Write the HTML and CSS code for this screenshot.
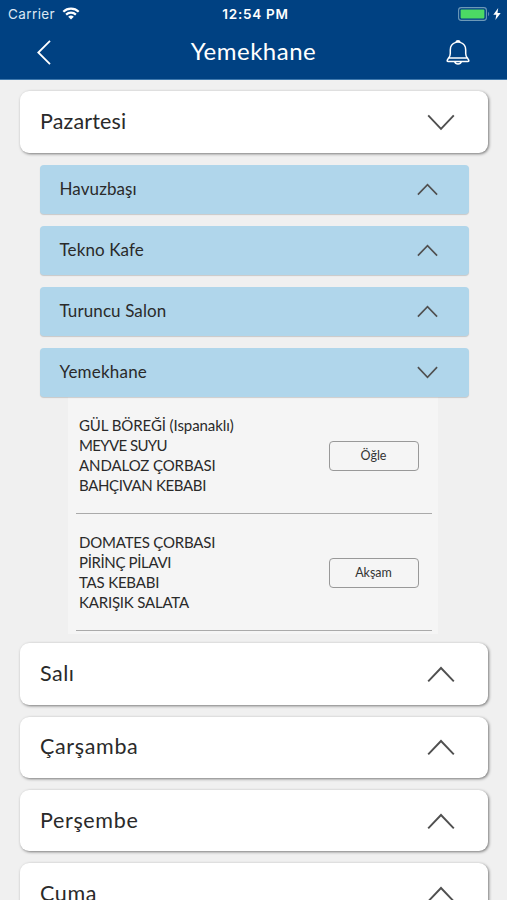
FILE: index.html
```html
<!DOCTYPE html>
<html lang="tr">
<head>
<meta charset="utf-8">
<meta name="viewport" content="width=device-width, initial-scale=1">
<title>Yemekhane</title>
<link rel="stylesheet" href="styles.css">
</head>
<body>
<svg class="defs" aria-hidden="true">
  <symbol id="down" viewBox="0 0 28 17"><path d="M1.2 1.4 14 14.8 26.8 1.4"/></symbol>
  <symbol id="up" viewBox="0 0 28 17"><path d="M1.2 15.4 14 2 26.8 15.4"/></symbol>
</svg>
<header class="header">
  <div class="status">
    <div class="status-left">
      <span class="carrier">Carrier</span>
      <svg class="wifi" viewBox="0 0 18 13">
        <path class="wave" d="M1.3 4.7a11 11 0 0 1 15.4 0M4.1 7.6a7 7 0 0 1 9.8 0"/>
        <path class="dot" d="M9 12.6 6.2 9.8a4 4 0 0 1 5.6 0z"/>
      </svg>
    </div>
    <span class="time">12:54 PM</span>
    <div class="status-right">
      <svg class="battery" viewBox="0 0 32 14">
        <rect class="shell" x=".6" y=".6" width="27.8" height="12.8" rx="2.6"/>
        <rect class="charge" x="2.6" y="2.6" width="23.8" height="8.8" rx=".8"/>
        <path class="cap" d="M30 4.8c1.6.8 1.6 3.6 0 4.4z"/>
      </svg>
      <svg class="bolt" viewBox="0 0 8 12"><path d="M5.2 0 .3 6.8h3L2.4 12 7.7 4.9H4.5z"/></svg>
    </div>
  </div>
  <nav class="nav">
    <svg class="back" viewBox="0 0 14 25"><path d="M13 .9 1.3 12.5 13 24.1"/></svg>
    <h1 class="title">Yemekhane</h1>
    <svg class="bell" viewBox="0 0 24 28">
      <path d="M9.8 3.4a2.3 2.3 0 0 1 4.4 0M9.8 3.4q2.200-.7 4.400 0c3.800 1.100 5.500 4 5.500 7.500v3.600c0 2 .5 3.400 1.800 4.600H2.500c1.300-1.200 1.800-2.600 1.800-4.600v-3.600c0-3.500 1.700-6.400 5.500-7.500zM2.500 19.100 1.300 21.200q-.5 1.300.8 1.300h19.800q1.300 0 .8-1.300l-1.200-2.100M8.500 22.500a3.700 3.700 0 0 0 7 0"/>
    </svg>
  </nav>
</header>
<main class="list">
  <section class="day"><span class="day-name">Pazartesi</span><svg class="chevron"><use href="#down"/></svg></section>
  <div class="places">
    <div class="place"><span>Havuzbaşı</span><svg class="chevron small"><use href="#up"/></svg></div>
    <div class="place"><span>Tekno Kafe</span><svg class="chevron small"><use href="#up"/></svg></div>
    <div class="place"><span>Turuncu Salon</span><svg class="chevron small"><use href="#up"/></svg></div>
    <div class="place"><span class="yemek">Yemekhane</span><svg class="chevron small"><use href="#down"/></svg></div>
  </div>
  <div class="meals">
    <div class="meal">
      <ul class="dishes">
        <li><span class="snug">GÜL BÖREĞİ (Ispanaklı)</span></li>
        <li><span class="tightest">MEYVE SUYU</span></li>
        <li><span class="snug">ANDALOZ ÇORBASI</span></li>
        <li><span class="tighter">BAHÇIVAN KEBABI</span></li>
      </ul>
      <button class="tag" type="button">Öğle</button>
    </div>
    <div class="meal">
      <ul class="dishes">
        <li><span class="tight">DOMATES ÇORBASI</span></li>
        <li><span class="tighter">PİRİNÇ PİLAVI</span></li>
        <li><span class="tight">TAS KEBABI</span></li>
        <li><span class="tight">KARIŞIK SALATA</span></li>
      </ul>
      <button class="tag" type="button">Akşam</button>
    </div>
  </div>
  <div class="rest">
    <section class="day"><span class="day-name sali">Salı</span><svg class="chevron"><use href="#up"/></svg></section>
    <section class="day"><span class="day-name wide">Çarşamba</span><svg class="chevron"><use href="#up"/></svg></section>
    <section class="day"><span class="day-name wide">Perşembe</span><svg class="chevron"><use href="#up"/></svg></section>
    <section class="day"><span class="day-name wide">Cuma</span><svg class="chevron"><use href="#up"/></svg></section>
  </div>
</main>
</body>
</html>
```
FILE: styles.css
```css
* { box-sizing: border-box; }
html, body { height: 100%; }
body {
  margin: 0;
  height: 900px;
  overflow: hidden;
  background: #f0f0f0;
  color: #2a2a2a;
  font-family: Lato, "Open Sans", sans-serif;
}
svg { display: block; flex: none; fill: none; }
.defs { width: 0; height: 0; float: left; }

.header { height: 79.5px; background: #004182; border-bottom: 1px solid #3f79ae; color: #fff; }
.status {
  height: 27px;
  padding: 0 6px 0 8px;
  display: grid;
  grid-template-columns: 1fr auto 1fr;
  align-items: center;
  font-family: Inter, sans-serif;
  font-size: 13.5px;
}
.status-left, .status-right { display: flex; align-items: center; }
.status-right { justify-content: flex-end; }
.carrier { color: #dbe7f3; letter-spacing: .4px; }
.wifi { width: 18px; height: 13px; margin-left: 6.5px; }
.wave { stroke: #fff; stroke-width: 2.2; }
.dot { fill: #fff; }
.time { padding-left: 2px; font-weight: 600; font-size: 13.5px; letter-spacing: .75px; }
.battery { width: 32px; height: 14px; }
.shell { stroke: #6d99b8; stroke-width: 1.1; }
.charge { fill: #4cd964; }
.cap { fill: #5e89b3; }
.bolt { width: 8px; height: 12px; margin-left: 3px; fill: #fff; }

.nav { height: 51px; padding: 0 37px; display: flex; align-items: center; justify-content: space-between; }
.back { width: 14px; height: 25px; stroke: #fff; stroke-width: 1.8; }
.title { margin: 0; padding: 0 0 4px 10px; font-size: 24px; font-weight: 400; line-height: 30px; letter-spacing: .5px; }
.bell { width: 24px; height: 28px; stroke: #fff; stroke-width: 1.5; stroke-linejoin: round; }

.list { padding: 11.5px 19.5px 0 20px; }
.day {
  height: 61.5px;
  padding: 0 33px 0 20px;
  display: flex;
  align-items: center;
  justify-content: space-between;
  background: #fff;
  border-radius: 9px;
  box-shadow: 1px 1px 3px rgba(0, 0, 0, .5);
}
.day-name { padding-bottom: 2px; font-size: 21.5px; line-height: 28px; letter-spacing: .15px; }
.day-name.sali { letter-spacing: .5px; }
.day-name.wide { letter-spacing: .65px; }
.chevron { width: 28px; height: 17px; stroke: #505050; stroke-width: 1.9; }
.day .chevron { margin-top: 1px; }
.chevron.small { width: 21px; height: 13px; stroke-width: 2.2; }

.places { padding: 12.3px 19px 0 20px; display: flex; flex-direction: column; gap: 11.5px; }
.place {
  height: 49.5px;
  padding: 0 30.5px 0 19.5px;
  display: flex;
  align-items: center;
  justify-content: space-between;
  background: #b0d6eb;
  border-radius: 4px;
  box-shadow: 0 1px 1px rgba(0, 0, 0, .17);
  font-size: 17px;
}
.place span { padding-bottom: 2px; letter-spacing: .1px; }
.place .yemek { letter-spacing: .2px; }
.meals { margin-left: 48px; width: 370px; height: 236.5px; padding: 0 6.5px 0 7.5px; background: #f5f5f5; }
.meal {
  height: 117px;
  padding: 0 13px 0 3.5px;
  display: flex;
  align-items: center;
  justify-content: space-between;
  border-bottom: 1.5px solid #aaa;
}
.dishes { margin: 0; padding: 0 0 1px; list-style: none; font-size: 15px; line-height: 20px; }
.snug { letter-spacing: -.09px; }
.tight { letter-spacing: -.2px; }
.tighter { letter-spacing: -.36px; }
.tightest { letter-spacing: -.62px; }
.tag {
  width: 90px;
  height: 30px;
  margin-top: 1.5px;
  padding: 0;
  border: 1.5px solid #999;
  border-radius: 4px;
  background: transparent;
  color: #333;
  font: 12.5px/20px Lato, sans-serif;
}
.rest { padding-top: 9.5px; display: flex; flex-direction: column; gap: 11.8px; }
```
